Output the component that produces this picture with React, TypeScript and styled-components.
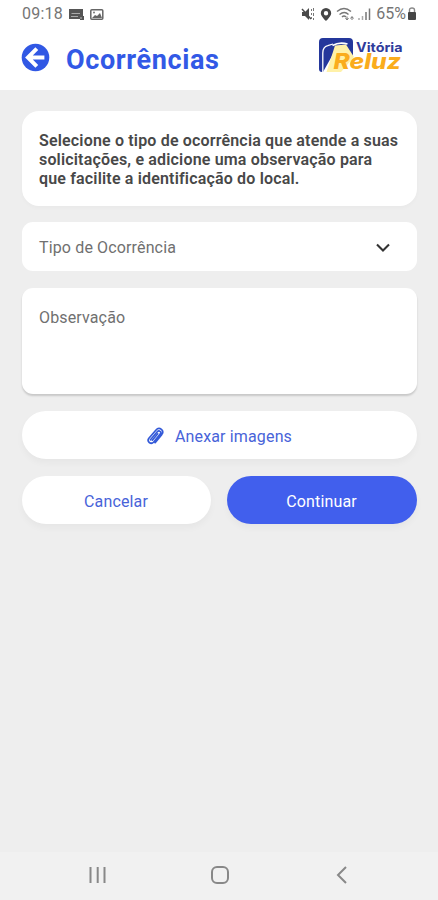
import React from "react";
import styled, { createGlobalStyle } from "styled-components";

const GlobalStyle = createGlobalStyle`
  * { box-sizing: border-box; }
  body { margin: 0; background: #eeeeee; font-family: Roboto, "Liberation Sans", sans-serif; }
  button { font-family: inherit; }
  svg { display: block; flex: none; }
`;

const Screen = styled.div`
  width: 438px;
  height: 900px;
  display: flex;
  flex-direction: column;
  background: #eeeeee;
  overflow: hidden;
`;

const Top = styled.header`
  height: 90px;
  background: #fff;
`;

const StatusBar = styled.div`
  height: 28px;
  padding: 0 21px 0 22px;
  display: flex;
  justify-content: space-between;
  align-items: center;
  color: #757575;
`;

const StatusGroup = styled.div<{ $gap: number }>`
  display: flex;
  align-items: center;
  gap: ${(p) => p.$gap}px;
`;

const StatusText = styled.span<{ $spacing: number }>`
  font-size: 16px;
  line-height: 28px;
  letter-spacing: ${(p) => p.$spacing}px;
`;

const TitleBar = styled.div`
  height: 60px;
  padding: 0 33px 0 21px;
  display: flex;
  align-items: center;
`;

const BackButton = styled.button`
  border: 0;
  padding: 0;
  background: none;
  margin: -1px 16px 0 0;
`;

const Title = styled.h1`
  margin: 4px auto 0 0;
  font-size: 27px;
  line-height: 32px;
  font-weight: 700;
  letter-spacing: 0.62px;
  color: #3259e6;
`;

const Logo = styled.svg`
  margin-top: -7px;
`;

const Content = styled.main`
  flex: 1;
  padding: 21px 21px 0 22px;
  display: flex;
  flex-direction: column;
`;

const Notice = styled.p`
  margin: 0 0 16px;
  height: 95px;
  padding: 20px 0 0 17px;
  border-radius: 17px;
  background: #fff;
  box-shadow: 0 2px 4px rgba(0, 0, 0, 0.025);
  color: #484848;
  font-size: 16px;
  font-weight: 600;
  line-height: 19px;
  letter-spacing: 0.17px;
  white-space: pre-line;
`;

const Field = styled.div<{ $height: number; $raised?: boolean }>`
  height: ${(p) => p.$height}px;
  margin-bottom: 17px;
  padding: ${(p) => (p.$raised ? "19px 26px 0 17px" : "15px 26px 0 17px")};
  display: flex;
  align-items: flex-start;
  justify-content: space-between;
  border-radius: 11px;
  background: #fff;
  box-shadow: ${(p) => (p.$raised ? "0 2px 2px rgba(0,0,0,0.16)" : "none")};
  color: #707070;
  font-size: 16px;
  line-height: 21px;
  letter-spacing: 0.14px;
`;

const Pill = styled.button<{ $primary?: boolean; $height: number }>`
  width: 100%;
  height: ${(p) => p.$height}px;
  border: 0;
  border-radius: 24px;
  padding: 2px 1px 0 0;
  display: flex;
  align-items: center;
  justify-content: center;
  gap: 11px;
  background: ${(p) => (p.$primary ? "#415fed" : "#fff")};
  color: ${(p) => (p.$primary ? "#fff" : "#4863d9")};
  box-shadow: 0 4px 7px rgba(0, 0, 0, 0.035);
  font-size: 16px;
  letter-spacing: 0.15px;
`;

const Actions = styled.div`
  margin-top: 17px;
  display: grid;
  grid-template-columns: 189px 190px;
  gap: 16px;
`;

const NavBar = styled.nav`
  height: 48px;
  display: flex;
  align-items: center;
  justify-content: space-between;
  padding: 0 87px 3px 85px;
  background: #f1f1f1;
`;

const BackIcon = () => (
  <svg width="29" height="29" viewBox="0 0 29 29">
    <circle cx="14.5" cy="14.5" r="13.8" fill="#3158e4" />
    <path d="M15.8 5.6 6.9 14.5l8.9 8.9M8 14.5h15.4" fill="none" stroke="#fff" strokeWidth="4" />
  </svg>
);

const ReluzLogo = () => (
  <Logo width="86" height="38" viewBox="0 0 86 38">
    <path d="M4 2h26q4 0 4 4v14H13L4 36H3q-3 0-3-3V6q0-4 4-4Z" fill="#24379b" />
    <path d="M3.8 36V17q0-6 5-7.3L14 8" fill="none" stroke="#fff" strokeWidth="1.3" />
    <path d="M16 9.5 27 8.5 35 21 22 36H7.5Z" fill="#fff1a8" />
    <path d="M13.5 9.5q7-4 15-1.5" fill="none" stroke="#fff" strokeWidth="1.8" />
    <text x="37" y="15.8" textLength="46.5" lengthAdjust="spacingAndGlyphs" fill="#303b9b" fontFamily="Inter, sans-serif" fontSize="12.8" fontWeight="700">Vitória</text>
    <text x="14.5" y="33.2" textLength="67.5" lengthAdjust="spacingAndGlyphs" fill="#faac1c" fontFamily="Inter, sans-serif" fontSize="21.5" fontStyle="italic" fontWeight="800">Reluz</text>
  </Logo>
);

const NotificationIcons = () => (
  <svg width="35" height="13" viewBox="0 0 35 13">
    <path d="M0 1h14v7h1v4h-4v-1H0Z" fill="#555" />
    <path d="M2.5 5.5h8.5M2 8.5h7m3 .5v2" stroke="#aaa" strokeWidth="1.2" fill="none" />
    <rect x="21.8" y="1.8" width="12" height="9.5" rx="1" fill="none" stroke="#666" strokeWidth="1.5" />
    <path d="m23 10 3-3 2 1 3-3 2 5Z" fill="#666" />
    <circle cx="25" cy="4.5" r="1" fill="#777" />
  </svg>
);

const SignalIcons = () => (
  <svg width="71" height="15" viewBox="0 0 71 15">
    <path d="M1 5h3l4-4v12L4 9H1Z" fill="#4a4a4a" />
    <path d="m1 2 9 10" stroke="#4a4a4a" strokeWidth="1.5" />
    <path d="M10.5 2v2m0 2v2m0 2v2M12.5 1v3m0 2v3m0 2v2" stroke="#777" fill="none" />
    <path d="M25 1a5.2 5.2 0 0 0-5.2 5.2C19.8 9.3 25 14 25 14s5.2-4.7 5.2-7.8A5.2 5.2 0 0 0 25 1Zm0 3a2.2 2.2 0 1 1 0 4.4A2.2 2.2 0 0 1 25 4Z" fill="#454545" fillRule="evenodd" />
    <path d="M36 4.5q7-6 14 0M38.5 7.5q5-4 9 0M41 10q2-2 4 0" fill="none" stroke="#777" strokeWidth="1.4" />
    <path d="M46 9.5v3m-1.5-1.5 1.5 2 1.5-2M51 13v-3m-1.5 1.5L51 9.5l1.5 2" fill="none" stroke="#777" />
    <path d="M58 13v-2m3.5 2V9" stroke="#aaa" strokeWidth="1.5" />
    <path d="M65 13V5m3.5 8V1.5" stroke="#777" strokeWidth="1.5" />
  </svg>
);

const BatteryLock = () => (
  <svg width="10" height="14" viewBox="0 0 10 14">
    <path d="M2.5 6V3q0-2 2.5-2t2.5 2v3" fill="none" stroke="#888" strokeWidth="1.4" />
    <rect x="1" y="5" width="8" height="8" rx="1" fill="#454545" />
  </svg>
);

const Paperclip = () => (
  <svg width="18" height="19" viewBox="0 0 18 19" fill="none" stroke="#345ad8" strokeWidth="1.7" strokeLinecap="round">
    <path d="m4.5 12.8 6.8-8.1q1.4-1.6 2.8-.4 1.4 1.1.1 2.7L7.7 15q-2 2.2-4.4.5-2.2-1.9-.4-4.2l6.9-8.1q2.7-3 5.6-.8 2.6 2.2.3 5.2l-6.6 8" />
    <path d="m6.3 13.2 5.4-6.4" />
  </svg>
);

export default function App() {
  return (
    <>
      <GlobalStyle />
      <Screen>
        <Top>
          <StatusBar>
            <StatusGroup $gap={6}>
              <StatusText $spacing={0.25}>09:18</StatusText>
              <NotificationIcons />
            </StatusGroup>
            <StatusGroup $gap={4}>
              <SignalIcons />
              <StatusGroup $gap={1}>
                <StatusText $spacing={0}>65%</StatusText>
                <BatteryLock />
              </StatusGroup>
            </StatusGroup>
          </StatusBar>
          <TitleBar>
            <BackButton aria-label="Voltar"><BackIcon /></BackButton>
            <Title>Ocorrências</Title>
            <ReluzLogo />
          </TitleBar>
        </Top>
        <Content>
          <Notice>{"Selecione o tipo de ocorrência que atende a suas\nsolicitações, e adicione uma observação para\nque facilite a identificação do local."}</Notice>
          <Field $height={49}>
            <span>Tipo de Ocorrência</span>
            <svg width="16" height="20" viewBox="0 0 16 20"><path d="m2 7.5 6 6 6-6" fill="none" stroke="#333" strokeWidth="2.1" /></svg>
          </Field>
          <Field $height={106} $raised>Observação</Field>
          <Pill $height={48}><Paperclip />Anexar imagens</Pill>
          <Actions>
            <Pill $height={48}>Cancelar</Pill>
            <Pill $height={48} $primary>Continuar</Pill>
          </Actions>
        </Content>
        <NavBar>
          <svg width="24" height="20" viewBox="0 0 24 20"><path d="M5.5 2v16M12.7 2v16M19.5 2v16" stroke="#888" strokeWidth="2" /></svg>
          <svg width="20" height="20" viewBox="0 0 20 20"><rect x="2" y="2" width="16" height="16" rx="5" fill="none" stroke="#888" strokeWidth="2" /></svg>
          <svg width="20" height="20" viewBox="0 0 20 20"><path d="m15 2-8 8 8 8" fill="none" stroke="#888" strokeWidth="2" /></svg>
        </NavBar>
      </Screen>
    </>
  );
}
